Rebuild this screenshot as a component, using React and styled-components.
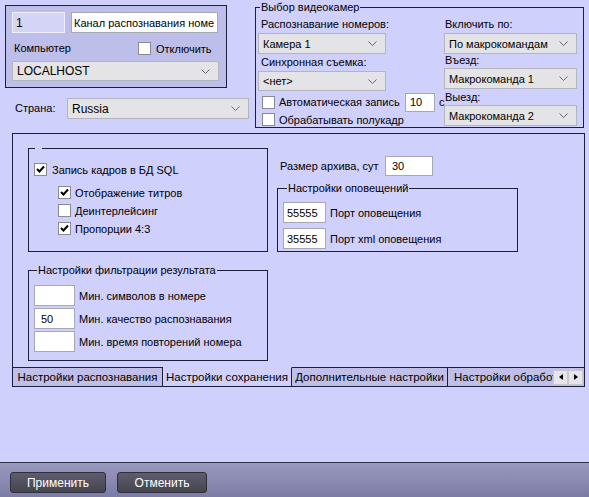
import styled, { createGlobalStyle } from "styled-components";

const GlobalStyle = createGlobalStyle`
  html, body {
    margin: 0;
    padding: 0;
  }
  body {
    background: #d0d0fc;
    font-family: "Liberation Sans", Arial, sans-serif;
    font-size: 11px;
    color: #000;
  }
  * {
    box-sizing: border-box;
  }
`;

const Chevron = () => (
  <svg width="9" height="5" viewBox="0 0 9 5">
    <path d="M0.5 0.5 L4.5 4.5 L8.5 0.5" fill="none" stroke="#6a6a6a" strokeWidth="1" />
  </svg>
);

const Tick = () => (
  <svg width="9" height="9" viewBox="0 0 9 9">
    <path d="M1 4 L3.5 6.5 L8 1.5" fill="none" stroke="#000" strokeWidth="2" />
  </svg>
);

const Arrow = ({ dir }) => (
  <svg width="4" height="6" viewBox="0 0 4 6">
    <path d={dir === "left" ? "M4 0 L0 3 L4 6 Z" : "M0 0 L4 3 L0 6 Z"} fill="#000" />
  </svg>
);

const Page = styled.div`
  min-height: 100vh;
  display: flex;
  flex-direction: column;
`;

const Top = styled.div`
  display: flex;
  align-items: flex-start;
  padding: 1px 0 0 5px;
`;

const LeftCol = styled.div`
  width: 244px;
  margin-top: 4px;
  display: flex;
  flex-direction: column;
`;

const ChannelBox = styled.div`
  width: 222px;
  border: 1px solid #1e1e3c;
  background: #bebeea;
  padding: 6px 7px 6px 6px;
  display: flex;
  flex-direction: column;
`;

const Row = styled.div`
  display: flex;
  align-items: center;
  margin-top: ${(p) => p.$mt || 0}px;
  gap: ${(p) => p.$gap || 0}px;
`;

const Field = styled.input`
  width: ${(p) => p.$w}px;
  height: ${(p) => p.$h || 21}px;
  border: 1px solid ${(p) => (p.$dim ? "#eeeeff" : "#a8a8b4")};
  background: ${(p) => (p.$dim ? "#d4d4f6" : "#fff")};
  font: inherit;
  font-size: ${(p) => p.$fs || 11}px;
  padding: 0 0 0 ${(p) => p.$pl ?? 4}px;
  margin: 0;
  color: #000;
  outline: none;
  flex-shrink: 0;
`;

const Label = styled.span`
  display: block;
  line-height: 13px;
  height: 13px;
  white-space: nowrap;
  width: ${(p) => (p.$w ? `${p.$w}px` : "auto")};
  padding-left: ${(p) => p.$pl || 0}px;
  margin-top: ${(p) => p.$mt || 0}px;
  flex-shrink: 0;
`;

const SelectBox = styled.div`
  width: ${(p) => p.$w}px;
  height: ${(p) => p.$h || 21}px;
  margin-top: ${(p) => p.$mt || 0}px;
  background: #e4e4e6;
  border: 1px solid #b4b4bc;
  display: flex;
  align-items: center;
  justify-content: space-between;
  padding: 0 8px 0 4px;
  font-size: ${(p) => p.$fs || 11}px;
  flex-shrink: 0;
`;

const Select = ({ w, h, mt, fs, children }) => (
  <SelectBox $w={w} $h={h} $mt={mt} $fs={fs}>
    <span>{children}</span>
    <Chevron />
  </SelectBox>
);

const Box = styled.span`
  width: 13px;
  height: 13px;
  background: #fff;
  border: 1px solid #8a8a92;
  display: inline-flex;
  align-items: center;
  justify-content: center;
  flex-shrink: 0;
`;

const CheckRow = styled.div`
  display: flex;
  align-items: center;
  height: ${(p) => p.$h || 13}px;
  margin-top: ${(p) => p.$mt || 0}px;
  padding-left: ${(p) => p.$pl || 0}px;
  gap: ${(p) => p.$gap || 5}px;
  white-space: nowrap;
`;

const Check = ({ checked }) => <Box>{checked && <Tick />}</Box>;

const Group = styled.fieldset`
  margin: ${(p) => p.$mt || 0}px 0 0 ${(p) => p.$ml || 0}px;
  width: ${(p) => p.$w}px;
  border: 1px solid #1e1e3c;
  padding: ${(p) => p.$pad || "0"};
  min-width: 0;
  display: flex;
  flex-direction: ${(p) => (p.$row ? "row" : "column")};
`;

const Legend = styled.legend`
  line-height: 13px;
  padding: 0 ${(p) => p.$px ?? 1}px;
  margin-left: ${(p) => p.$ml || 0}px;
  white-space: nowrap;
`;

const Col = styled.div`
  display: flex;
  flex-direction: column;
  width: ${(p) => p.$w}px;
  margin-left: ${(p) => p.$ml || 0}px;
`;

const Panel = styled.div`
  margin: 5px 4px 0 12px;
  border: 1px solid #1e1e3c;
  border-bottom: none;
`;

const PanelBody = styled.div`
  height: 233px;
  display: flex;
  padding: 8px 0 0 15px;
`;

const TabStrip = styled.div`
  display: flex;
  height: 20px;
  border-bottom: 1px solid #1e1e3c;
`;

const Tab = styled.div`
  width: ${(p) => (p.$w ? `${p.$w}px` : "auto")};
  flex: ${(p) => (p.$w ? "none" : "1")};
  min-width: 0;
  overflow: hidden;
  white-space: nowrap;
  border-top: 1px solid ${(p) => (p.$active ? "transparent" : "#1e1e3c")};
  border-right: ${(p) => (p.$last ? "none" : "1px solid #1e1e3c")};
  background: ${(p) => (p.$active ? "#d0d0fc" : "#bfbfe8")};
  font-size: 11.5px;
  line-height: 18px;
  text-align: ${(p) => (p.$w ? "center" : "left")};
  padding-left: ${(p) => (p.$w ? 0 : 6)}px;
`;

const Arrows = styled.div`
  display: flex;
  align-items: center;
  border-top: 1px solid #1e1e3c;
  background: #bfbfe8;
  padding: 0 1px 0 0;
`;

const ArrowBtn = styled.span`
  width: 15px;
  height: 15px;
  background: #e6e6ea;
  border: 1px solid #c8c8d0;
  display: inline-flex;
  align-items: center;
  justify-content: center;
`;

const Bar = styled.div`
  margin-top: auto;
  height: 35px;
  border-top: 1px solid #2d2d45;
  background: linear-gradient(#9a9abf, #7b7ba6);
  display: flex;
  align-items: flex-start;
  padding: 9px 0 0 10px;
  gap: 11px;
`;

const Button = styled.button`
  width: ${(p) => p.$w}px;
  height: 21px;
  border: 1px solid #2e2e3c;
  border-radius: 3px;
  background: linear-gradient(#5c5c6e, #45454f);
  color: #fff;
  font-family: "Liberation Sans", Arial, sans-serif;
  font-size: 12px;
  padding: 0;
`;

export default function App() {
  return (
    <Page>
      <GlobalStyle />
      <Top>
        <LeftCol>
          <ChannelBox>
            <Row $gap={6}>
              <Field $w={53} $dim $pl={3} defaultValue="1" readOnly $fs={12} />
              <Field $w={147} $pl={2} defaultValue="Канал распознавания номе" readOnly $fs={11} />
            </Row>
            <Row $mt={9}>
              <Label $w={126} $pl={2}>Компьютер</Label>
              <CheckRow $gap={5}>
                <Check />
                <span>Отключить</span>
              </CheckRow>
            </Row>
            <Select w={207} h={20} mt={6} fs={12}>LOCALHOST</Select>
          </ChannelBox>
          <Row $mt={10}>
            <Label $w={62} $pl={10}>Страна:</Label>
            <Select w={182} fs={12}>Russia</Select>
          </Row>
        </LeftCol>

        <Group $ml={6} $w={329} $pad="0 6px 1px 1px" $row>
          <Legend $ml={3}>Выбор видеокамер</Legend>
          <Col $w={144} $ml={1}>
            <Label $mt={4} $pl={3}>Распознавание номеров:</Label>
            <Select w={128} mt={2}>Камера 1</Select>
            <Label $mt={2} $pl={3}>Синхронная съемка:</Label>
            <Select w={128} h={20} mt={2}>&lt;нет&gt;</Select>
            <CheckRow $h={18} $mt={2} $pl={4} $gap={4}>
              <Check />
              <Label $w={122}>Автоматическая запись</Label>
              <Field $w={30} $h={19} $pl={4} defaultValue="10" readOnly />
              <span>с</span>
            </CheckRow>
            <CheckRow $mt={2} $pl={4} $gap={4}>
              <Check />
              <span>Обрабатывать полукадр</span>
            </CheckRow>
          </Col>
          <Col $w={133} $ml={42}>
            <Label $mt={4} $pl={1}>Включить по:</Label>
            <Select w={133} mt={2}>По макрокомандам</Select>
            <Label $pl={1}>Въезд:</Label>
            <Select w={133} mt={1}>Макрокоманда 1</Select>
            <Label $mt={2} $pl={1}>Выезд:</Label>
            <Select w={133} mt={1}>Макрокоманда 2</Select>
          </Col>
        </Group>
      </Top>

      <Panel>
        <PanelBody>
          <Col $w={240}>
            <Group $w={240} $pad="0 0 16px 5px">
              <Legend $ml={1} $px={2}>&nbsp;</Legend>
              <CheckRow $mt={8} $gap={5}>
                <Check checked />
                <span>Запись кадров в БД SQL</span>
              </CheckRow>
              <CheckRow $mt={10} $pl={24} $gap={4}>
                <Check checked />
                <span>Отображение титров</span>
              </CheckRow>
              <CheckRow $mt={5} $pl={24} $gap={4}>
                <Check />
                <span>Деинтерлейсинг</span>
              </CheckRow>
              <CheckRow $mt={5} $pl={24} $gap={4}>
                <Check checked />
                <span>Пропорции 4:3</span>
              </CheckRow>
            </Group>

            <Group $mt={12} $w={240} $pad="8px 0 8px 5px">
              <Legend $ml={3}>Настройки фильтрации результата</Legend>
              <Row $gap={4}>
                <Field $w={41} readOnly defaultValue="" />
                <span>Мин. символов в номере</span>
              </Row>
              <Row $gap={4} $mt={2}>
                <Field $w={41} $pl={6} readOnly defaultValue="50" />
                <span>Мин. качество распознавания</span>
              </Row>
              <Row $gap={4} $mt={2}>
                <Field $w={41} readOnly defaultValue="" />
                <span>Мин. время повторений номера</span>
              </Row>
            </Group>
          </Col>

          <Col $w={241} $ml={9}>
            <Row $mt={14}>
              <Label $w={108} $pl={3}>Размер архива, сут</Label>
              <Field $w={48} $h={20} $pl={6} readOnly defaultValue="30" />
            </Row>
            <Group $mt={6} $w={241} $pad="7px 0 2px 5px">
              <Legend $ml={4}>Настройки оповещений</Legend>
              <Row $gap={4}>
                <Field $w={43} $pl={3} readOnly defaultValue="55555" />
                <span>Порт оповещения</span>
              </Row>
              <Row $gap={4} $mt={5}>
                <Field $w={43} $pl={3} readOnly defaultValue="35555" />
                <span>Порт xml оповещения</span>
              </Row>
            </Group>
          </Col>
        </PanelBody>

        <TabStrip>
          <Tab $w={150}>Настройки распознавания</Tab>
          <Tab $w={129} $active>Настройки сохранения</Tab>
          <Tab $w={156}>Дополнительные настройки</Tab>
          <Tab $last>Настройки обработ</Tab>
          <Arrows>
            <ArrowBtn><Arrow dir="left" /></ArrowBtn>
            <ArrowBtn><Arrow dir="right" /></ArrowBtn>
          </Arrows>
        </TabStrip>
      </Panel>

      <Bar>
        <Button $w={96}>Применить</Button>
        <Button $w={90}>Отменить</Button>
      </Bar>
    </Page>
  );
}
